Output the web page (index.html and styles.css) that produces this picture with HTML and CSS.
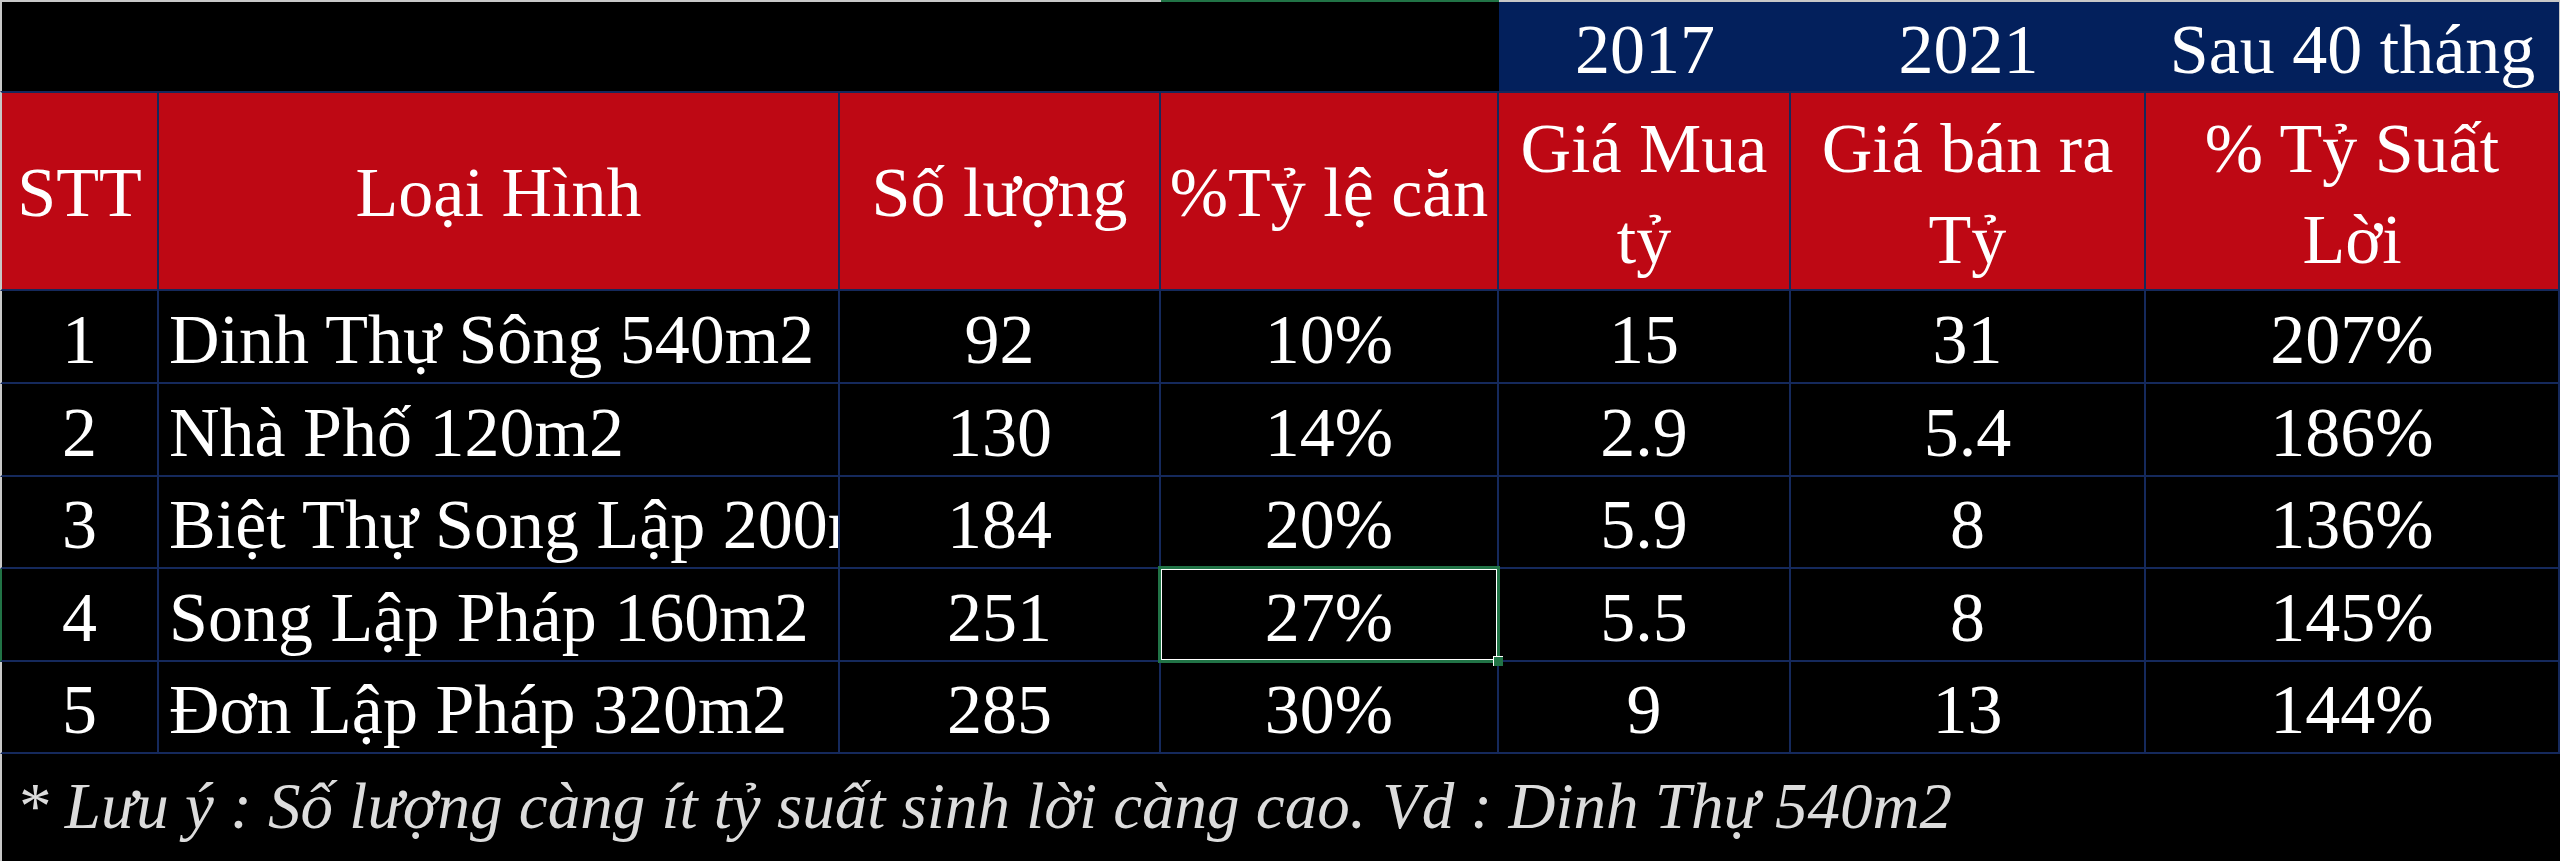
FILE: index.html
```html
<!DOCTYPE html>
<html lang="vi">
<head>
<meta charset="utf-8">
<title>Bảng tỷ suất lời</title>
<link rel="stylesheet" href="styles.css">
</head>
<body>
<div class="sheet">
  <div class="top blank first span3"></div>
  <div class="top blank sel-col"></div>
  <div class="top year">2017</div>
  <div class="top year">2021</div>
  <div class="top year last">Sau 40 tháng</div>

  <div class="hd first">STT</div>
  <div class="hd">Loại Hình</div>
  <div class="hd">Số lượng</div>
  <div class="hd">%Tỷ lệ căn</div>
  <div class="hd two">Giá Mua<br>tỷ</div>
  <div class="hd two">Giá bán ra<br>Tỷ</div>
  <div class="hd two last">% Tỷ Suất<br>Lời</div>

  <div class="cell first">1</div>
  <div class="cell name">Dinh Thự Sông 540m2</div>
  <div class="cell">92</div>
  <div class="cell">10%</div>
  <div class="cell">15</div>
  <div class="cell">31</div>
  <div class="cell last">207%</div>

  <div class="cell first">2</div>
  <div class="cell name">Nhà Phố 120m2</div>
  <div class="cell">130</div>
  <div class="cell">14%</div>
  <div class="cell">2.9</div>
  <div class="cell">5.4</div>
  <div class="cell last">186%</div>

  <div class="cell first">3</div>
  <div class="cell name">Biệt Thự Song Lập 200m2</div>
  <div class="cell">184</div>
  <div class="cell">20%</div>
  <div class="cell">5.9</div>
  <div class="cell">8</div>
  <div class="cell last">136%</div>

  <div class="cell first sel-row">4</div>
  <div class="cell name">Song Lập Pháp 160m2</div>
  <div class="cell">251</div>
  <div class="cell selected">27%<span class="handle"></span></div>
  <div class="cell">5.5</div>
  <div class="cell">8</div>
  <div class="cell last">145%</div>

  <div class="cell first">5</div>
  <div class="cell name">Đơn Lập Pháp 320m2</div>
  <div class="cell">285</div>
  <div class="cell">30%</div>
  <div class="cell">9</div>
  <div class="cell">13</div>
  <div class="cell last">144%</div>

  <div class="note first">* Lưu ý : Số lượng càng ít tỷ suất sinh lời càng cao. Vd : Dinh Thự 540m2</div>
</div>
</body>
</html>
```

FILE: styles.css
```css
html, body {
  margin: 0;
  padding: 0;
  background: #000;
}

.sheet {
  width: 2560px;
  height: 861px;
  display: grid;
  grid-template-columns: 159px 681px 321px 338px 292px 355px 414px;
  grid-template-rows: 91px 200px 93px 93px 92px 93px 92px 107px;
  font-family: "Liberation Serif", "Times New Roman", serif;
  font-size: 70px;
  color: #fff;
  background: #000;
  overflow: hidden;
}

.sheet > div {
  box-sizing: border-box;
  display: flex;
  align-items: center;
  justify-content: center;
  white-space: nowrap;
  overflow: hidden;
}

.first {
  border-left: 2px solid #c8c8c8;
}

.last {
  border-right: 1px solid #c8c8c8;
}

/* top row */
.top {
  border-top: 2px solid #c8c8c8;
  padding-top: 6px;
}

.span3 {
  grid-column: span 3;
}

.blank {
  background: #000;
}

.top.sel-col {
  border-top-color: #217346;
}

.year {
  background: #03205c;
}

/* header */
.hd {
  background: #be0814;
  border-top: 2px solid #15295c;
  border-bottom: 2px solid #15295c;
  border-right: 2px solid #15295c;
  padding-top: 4px;
}

.hd.last,
.cell.last {
  border-right: 2px solid #15295c;
}

.hd.two {
  text-align: center;
  line-height: 91px;
  padding-top: 6px;
}

/* data */
.cell {
  border-right: 2px solid #15295c;
  border-bottom: 2px solid #15295c;
  padding-top: 6px;
}

.cell.name {
  justify-content: flex-start;
  padding-left: 10px;
}

.first.sel-row {
  border-left-color: #217346;
}

.sheet > .selected {
  position: relative;
  overflow: visible;
}

.selected::after {
  content: "";
  position: absolute;
  left: -3px;
  top: -3px;
  right: -3px;
  bottom: -3px;
  border: 3px solid #217346;
  box-shadow: inset 0 0 0 1px #fff;
  pointer-events: none;
}

.handle {
  position: absolute;
  right: -6px;
  bottom: -6px;
  width: 9px;
  height: 9px;
  background: #217346;
  border-top: 1px solid #fff;
  border-left: 1px solid #fff;
  z-index: 2;
}

/* note */
.sheet > .note {
  grid-column: 1 / -1;
  justify-content: flex-start;
  padding-left: 14px;
  padding-bottom: 2px;
  font-style: italic;
  font-size: 65px;
  color: #dcdcdc;
}
```
